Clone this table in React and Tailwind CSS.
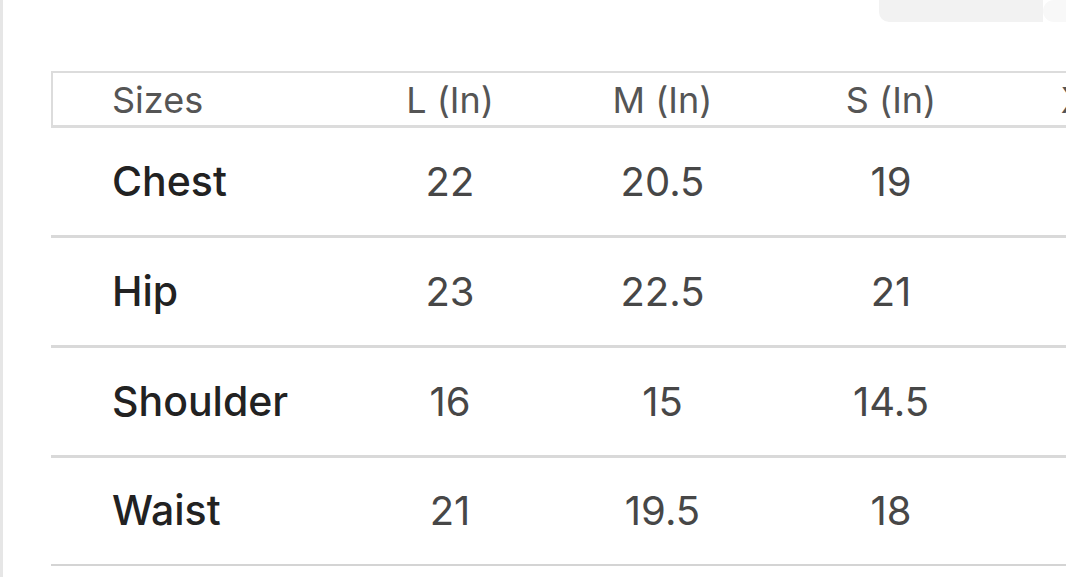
import React from "react";

export default function App() {
  // columnas: nombre de medida + talles (la última queda cortada a la derecha)
  const sizes = ["L (In)", "M (In)", "S (In)", "XS (In)"];
  const rows = [
    { name: "Chest", values: ["22", "20.5", "19"] },
    { name: "Hip", values: ["23", "22.5", "21"] },
    { name: "Shoulder", values: ["16", "15", "14.5"] },
    { name: "Waist", values: ["21", "19.5", "18"] },
  ];

  const cols = "grid grid-cols-[287px_220px_205px_252px_202px]";

  return (
    <div
      className="w-[1066px] h-[577px] overflow-hidden bg-white border-l-[3px] border-[#e6e6e6]"
      style={{ fontFamily: "Inter, 'Noto Sans', sans-serif" }}
    >
      {/* barra gris de arriba, cortada */}
      <div className="flex justify-end h-[22px]">
        <div className="w-[164px] h-full bg-[#f2f2f2] rounded-bl-[10px]" />
        <div className="w-[23px] h-full bg-[#f8f8f8] rounded-l-[14px]" />
      </div>

      <div className="mt-[49px] ml-[48px] w-[1100px]">
        {/* cabecera */}
        <div
          className={`${cols} h-[57px] items-center border-t-2 border-l-2 border-b-[3px] border-[#dcdcdc] text-[36px] text-[#555]`}
        >
          <div className="pl-[59px]">Sizes</div>
          {sizes.map((s) => (
            <div key={s} className="text-center whitespace-nowrap">
              {s}
            </div>
          ))}
        </div>

        {/* filas */}
        {rows.map((r, idx) => (
          <div
            key={r.name}
            className={`${cols} pl-[2px] items-center ${
              idx === rows.length - 1
                ? "h-[108px] border-b-2 border-[#d4d4d4]"
                : "h-[110px] border-b-[3px] border-[#d9d9d9]"
            }`}
          >
            <div className="pl-[59px] text-[41px] font-medium text-[#222]">{r.name}</div>
            {r.values.map((v, i) => (
              <div key={i} className="text-center text-[40px] text-[#474747]">
                {v}
              </div>
            ))}
          </div>
        ))}
      </div>
    </div>
  );
}
